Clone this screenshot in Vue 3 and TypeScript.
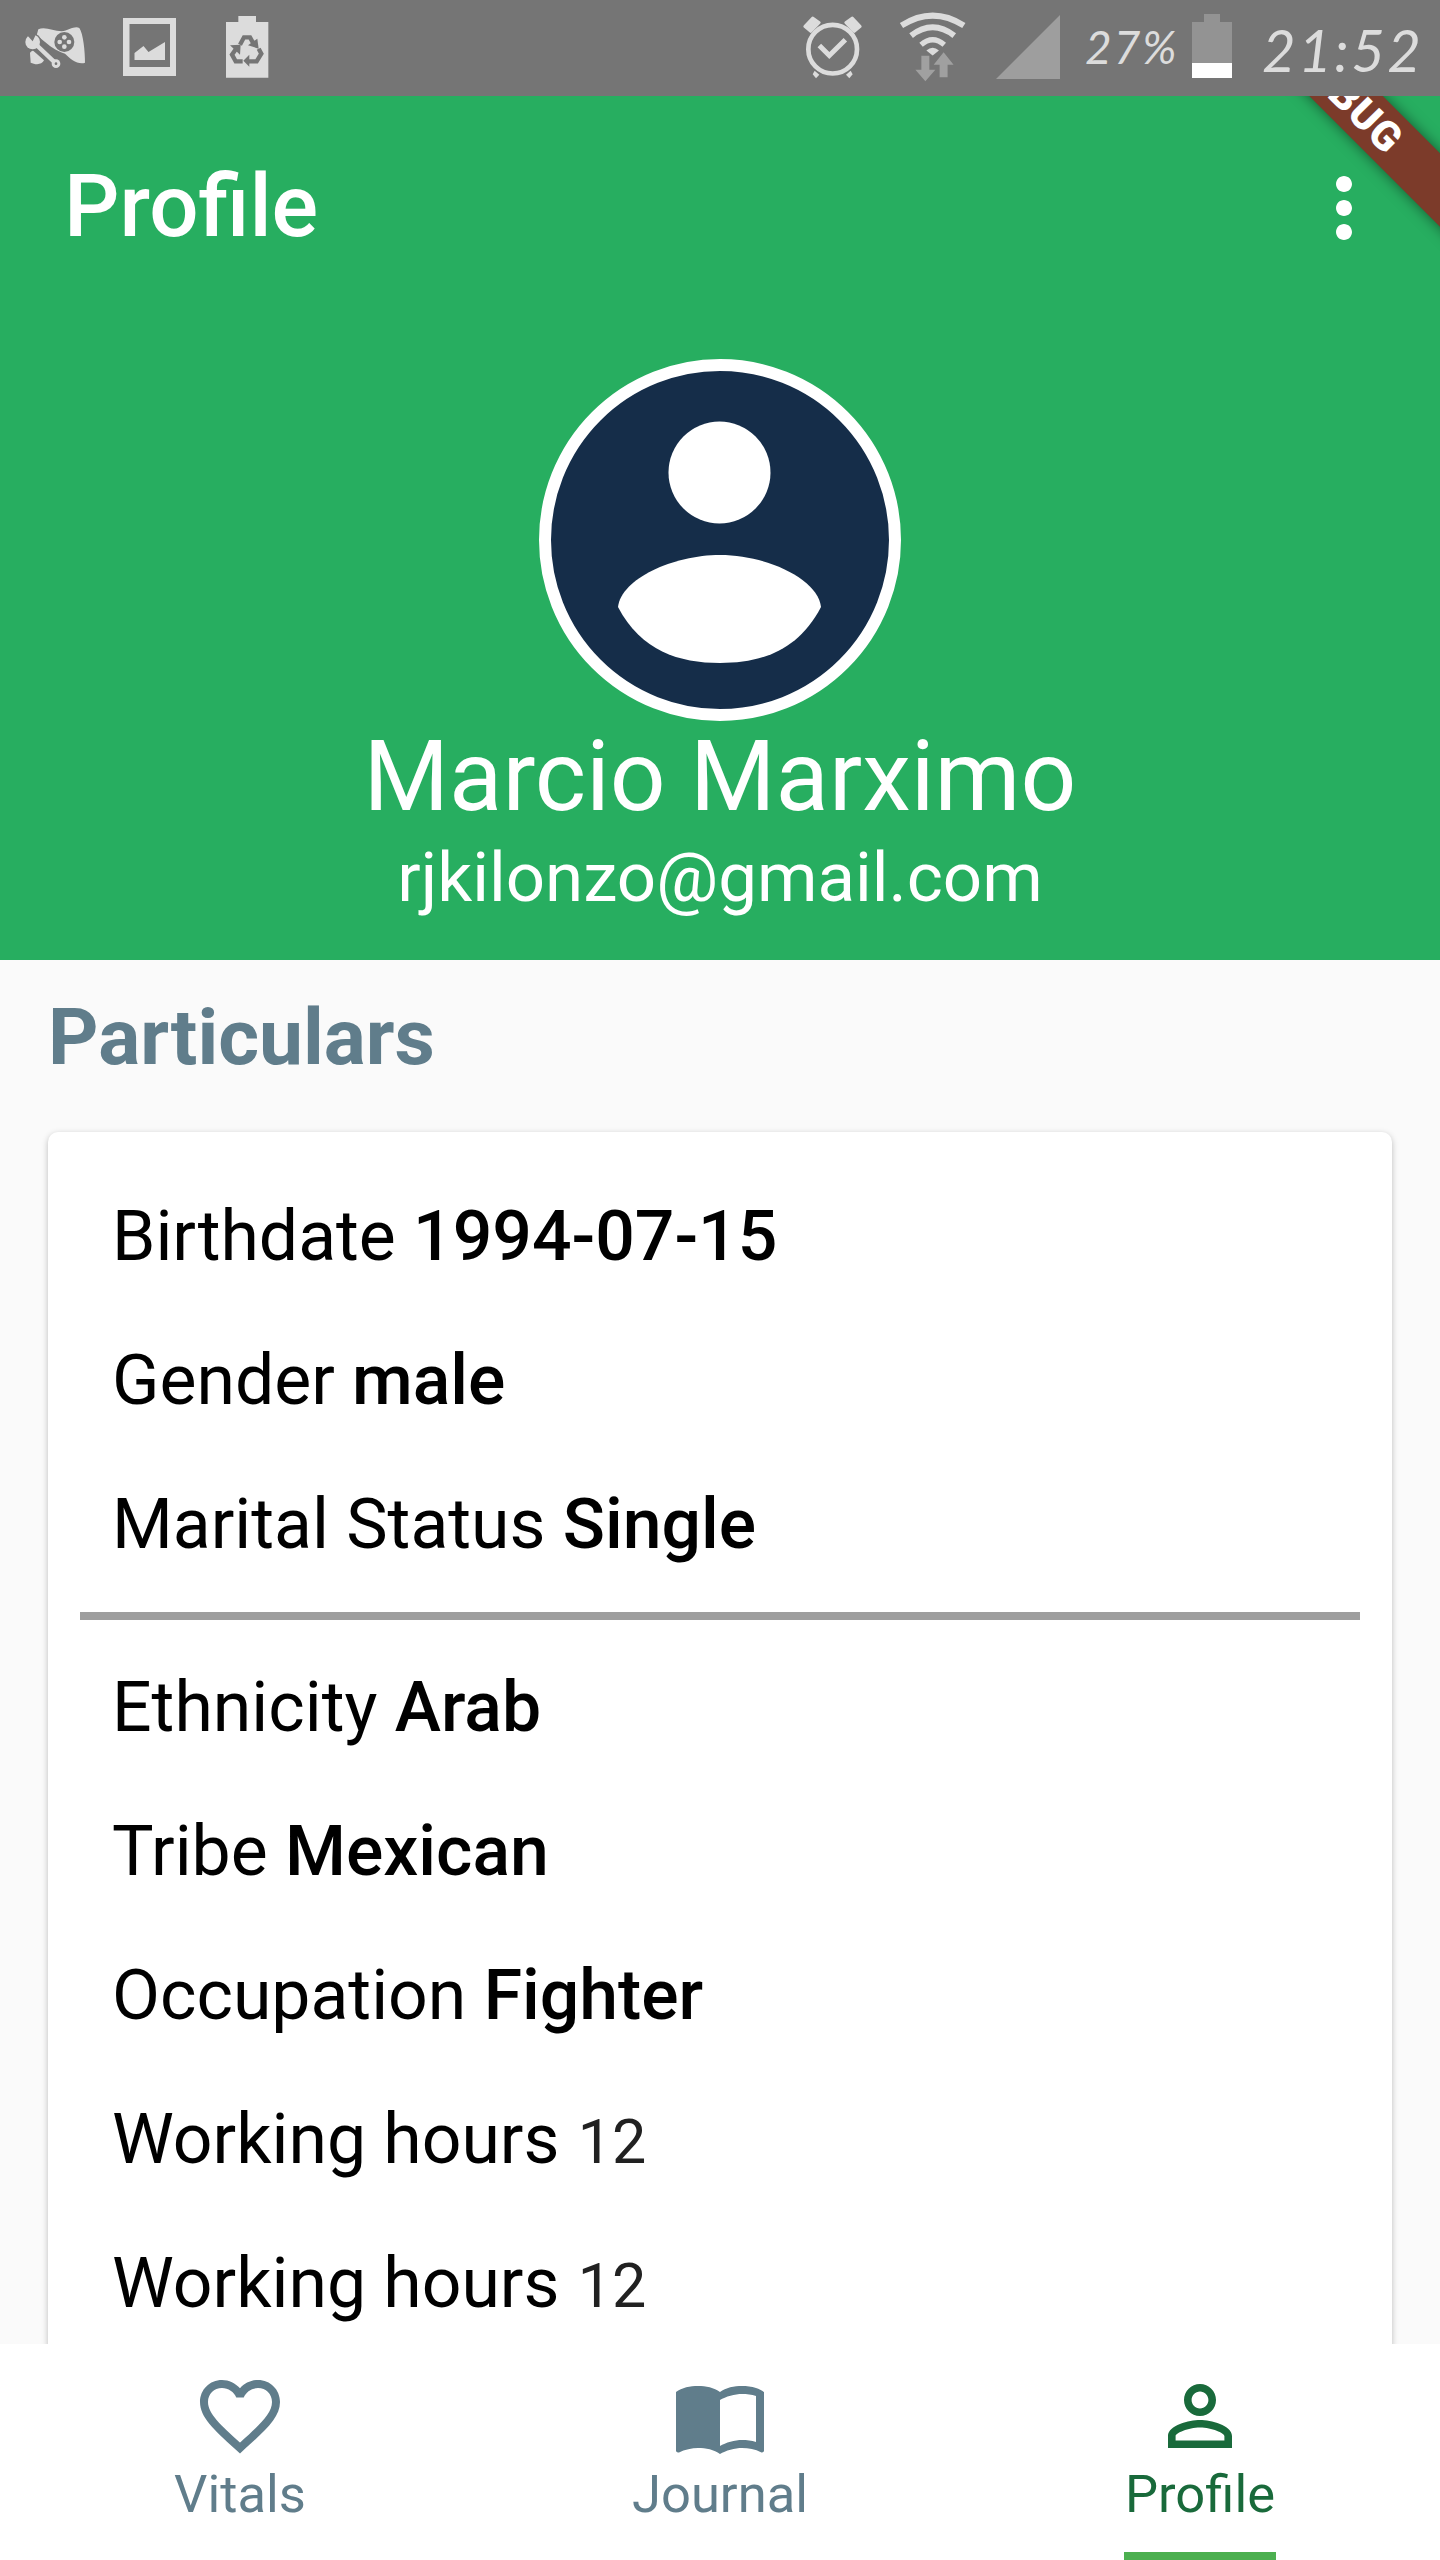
<script setup lang="ts">
interface Particular {
  label: string;
  value: string;
  plain?: boolean;
}

const personal: Particular[] = [
  { label: "Birthdate", value: "1994-07-15" },
  { label: "Gender", value: "male" },
  { label: "Marital Status", value: "Single" },
];

const other: Particular[] = [
  { label: "Ethnicity", value: "Arab" },
  { label: "Tribe", value: "Mexican" },
  { label: "Occupation", value: "Fighter" },
  { label: "Working hours", value: "12", plain: true },
  { label: "Working hours", value: "12", plain: true },
];

const tabs = [
  {
    name: "Vitals",
    active: false,
    icon: "M16.5 3c-1.74 0-3.41.81-4.5 2.09C10.91 3.81 9.24 3 7.5 3 4.42 3 2 5.42 2 8.5c0 3.78 3.4 6.86 8.55 11.54L12 21.35l1.45-1.32C18.6 15.36 22 12.28 22 8.5 22 5.42 19.58 3 16.5 3zm-4.4 15.55l-.1.1-.1-.1C7.14 14.24 4 11.39 4 8.5 4 6.5 5.5 5 7.5 5c1.54 0 3.04.99 3.57 2.36h1.87C13.46 5.99 14.96 5 16.5 5c2 0 3.5 1.5 3.5 3.5 0 2.89-3.14 5.74-7.9 10.05z",
  },
  {
    name: "Journal",
    active: false,
    icon: "M21 5c-1.11-.35-2.33-.5-3.5-.5-1.95 0-4.05.4-5.5 1.5-1.45-1.1-3.55-1.5-5.5-1.5S2.45 4.9 1 6v14.65c0 .25.25.5.5.5.1 0 .15-.05.25-.05C3.1 20.45 5.05 20 6.5 20c1.95 0 4.05.4 5.5 1.5 1.35-.85 3.8-1.5 5.5-1.5 1.65 0 3.35.3 4.75 1.05.1.05.15.05.25.05.25 0 .5-.25.5-.5V6c-.6-.45-1.25-.75-2-1zm0 13.5c-1.1-.35-2.3-.5-3.5-.5-1.7 0-4.15.65-5.5 1.5V8c1.35-.85 3.8-1.5 5.5-1.5 1.2 0 2.4.15 3.5.5v11.5z",
  },
  {
    name: "Profile",
    active: true,
    icon: "M12 5.9c1.16 0 2.1.94 2.1 2.1s-.94 2.1-2.1 2.1S9.9 9.16 9.9 8s.94-2.1 2.1-2.1m0 9c2.97 0 6.1 1.46 6.1 2.1v1.1H5.9V17c0-.64 3.13-2.1 6.1-2.1M12 4C9.79 4 8 5.79 8 8s1.79 4 4 4 4-1.79 4-4-1.79-4-4-4zm0 9c-2.67 0-8 1.34-8 4v3h16v-3c0-2.66-5.33-4-8-4z",
  },
];
</script>

<template>
  <div class="phone">
    <div class="status-bar">
      <svg class="st-game" viewBox="0 0 210 150">
        <path fill="#dcdcdc" d="M55 22C75 12 100 28 125 28C145 25 165 10 178 18C190 35 195 90 195 122C175 130 150 110 135 95C120 90 100 80 90 72L50 40Z" />
        <circle cx="133" cy="60" r="30" fill="#757575" />
        <circle cx="133" cy="46" r="7" fill="#dcdcdc" />
        <circle cx="133" cy="74" r="7" fill="#dcdcdc" />
        <circle cx="119" cy="60" r="7" fill="#dcdcdc" />
        <circle cx="147" cy="60" r="7" fill="#dcdcdc" />
        <path fill="#dcdcdc" d="M30 92L38 85L72 115C65 130 45 128 32 122Z" />
        <path fill="none" stroke="#757575" stroke-width="26" d="M40 60L110 126" />
        <circle cx="38" cy="60" r="26" fill="#757575" />
        <path fill="none" stroke="#dcdcdc" stroke-width="13" stroke-linecap="round" d="M40 60L108 125" />
        <circle cx="38" cy="60" r="22" fill="#dcdcdc" />
        <path fill="#757575" d="M18 36L38 58L50 32Z" />
        <circle cx="108" cy="125" r="13" fill="#dcdcdc" />
        <circle cx="108" cy="125" r="4" fill="#757575" />
      </svg>
      <svg class="st-photo" viewBox="0 0 53 58">
        <path fill="#dcdcdc" fill-rule="evenodd" d="M0 0H53V58H0Z M6.500 6V49H47V6Z" />
        <path fill="#dcdcdc" d="M11.500 42V35L20.500 28L25.500 34L42 24V42Z" />
      </svg>
      <svg class="st-recycle" viewBox="0 0 162 210">
        <path fill="#dcdcdc" d="M55 12H108V30H145V197H18V30H55Z" />
        <path fill="none" stroke="#757575" stroke-width="13" d="M60 98L72 76H90L100 94" />
        <path fill="#757575" d="M84 100L116 110L112 80Z" />
        <path fill="none" stroke="#757575" stroke-width="13" d="M50 108L36 128L47 148H68" />
        <path fill="#757575" d="M30 100L62 98L60 128Z" />
        <path fill="none" stroke="#757575" stroke-width="13" d="M85 148H110L124 125L116 110" />
        <path fill="#757575" d="M88 128V164L70 146Z" />
      </svg>

      <div class="spacer"></div>

      <svg class="st-alarm" viewBox="30 25 195 200">
        <path fill="#dcdcdc" stroke="#dcdcdc" stroke-width="8" stroke-linejoin="round" d="M44 65L68 39L88 53L62 80Z" />
        <path fill="#dcdcdc" stroke="#dcdcdc" stroke-width="8" stroke-linejoin="round" d="M211 65L187 39L167 53L193 80Z" />
        <circle cx="128" cy="133" r="73" fill="none" stroke="#dcdcdc" stroke-width="14" />
        <path fill="none" stroke="#dcdcdc" stroke-width="15" d="M88 122L118 152L166 105" />
        <path fill="#dcdcdc" d="M74 198L88 210L78 220L68 208Z" />
        <path fill="#dcdcdc" d="M182 198L168 210L178 220L188 208Z" />
      </svg>
      <svg class="st-wifi" viewBox="320 15 210 220">
        <g fill="none" stroke="#dcdcdc">
          <path stroke-width="18" d="M333 62Q427 2 521 62" />
          <path stroke-width="18" d="M362 92Q427 42 492 92" />
          <path stroke-width="16" d="M392 120Q427 90 462 120" />
        </g>
        <path fill="#dcdcdc" d="M408 137Q427 120 446 137L427 152Z" />
        <path fill="#a0a0a0" d="M393 153H417V195H435L405 230L375 195H393Z" />
        <path fill="#a0a0a0" d="M448 218H472V180H490L460 142L430 180H448Z" />
      </svg>
      <svg class="st-signal" viewBox="0 0 64 64">
        <path fill="#9e9e9e" d="M64 0V64H0Z" />
      </svg>
      <span class="st-percent">27%</span>
      <div class="st-battery">
        <div class="st-battery-cap"></div>
        <div class="st-battery-body">
          <div class="st-battery-level"></div>
        </div>
      </div>
      <span class="st-time">21:52</span>
    </div>

    <header class="hero">
      <div class="toolbar">
        <h1 class="title">Profile</h1>
        <svg class="more" viewBox="0 0 24 24">
          <path fill="#fff" d="M12 8c1.1 0 2-.9 2-2s-.9-2-2-2-2 .9-2 2 .9 2 2 2zm0 2c-1.1 0-2 .9-2 2s.9 2 2 2 2-.9 2-2-.9-2-2-2zm0 6c-1.1 0-2 .9-2 2s.9 2 2 2 2-.9 2-2-.9-2-2-2z" />
        </svg>
      </div>
      <div class="avatar">
        <svg viewBox="0 0 338 338">
          <circle cx="168.500" cy="101.500" r="51" fill="#fff" />
          <path fill="#fff" d="M67 236C70 208 122 184 169 184C216 184 267 208 270 236C247 280 210 292 169 292C128 292 90 280 67 236Z" />
        </svg>
      </div>
      <div class="name">Marcio Marximo</div>
      <div class="email">rjkilonzo@gmail.com</div>
      <div class="banner"><span>DEBUG</span></div>
    </header>

    <main class="content">
      <h2 class="section-title">Particulars</h2>
      <section class="card">
        <p v-for="row in personal" :key="row.label" class="row">
          {{ row.label }} <b>{{ row.value }}</b>
        </p>
        <hr class="divider" />
        <p v-for="(row, i) in other" :key="i" class="row">
          {{ row.label }} <b :class="{ plain: row.plain }">{{ row.value }}</b>
        </p>
      </section>
    </main>

    <nav class="tabs">
      <div v-for="tab in tabs" :key="tab.name" class="tab" :class="{ active: tab.active }">
        <svg class="tab-icon" viewBox="0 0 24 24">
          <path :d="tab.icon" />
        </svg>
        <span class="tab-label">{{ tab.name }}</span>
      </div>
    </nav>
  </div>
</template>

<style>
body {
  margin: 0;
}
</style>

<style scoped>
.phone {
  width: 1440px;
  height: 2560px;
  display: flex;
  flex-direction: column;
  overflow: hidden;
  background: #fafafa;
  font-family: Roboto, "Liberation Sans", sans-serif;
}

.status-bar {
  height: 96px;
  flex: none;
  display: flex;
  align-items: flex-start;
  background: #757575;
  position: relative;
  z-index: 2;
}

.spacer {
  flex: 1;
}

.st-game {
  width: 70px;
  height: 50px;
  margin: 22px 0 0 20px;
}

.st-photo {
  width: 53px;
  height: 58px;
  margin: 18px 0 0 33px;
}

.st-recycle {
  width: 54px;
  height: 70px;
  margin: 12px 0 0 44px;
}

.st-alarm {
  width: 65px;
  height: 67px;
  margin: 13px 0 0 0;
}

.st-wifi {
  width: 70px;
  height: 73px;
  margin: 10px 0 0 32px;
}

.st-signal {
  width: 64px;
  height: 64px;
  margin: 15px 0 0 29px;
}

.st-percent,
.st-time {
  font-family: Lato, sans-serif;
  font-style: italic;
  font-weight: 400;
  color: #dcdcdc;
}

.st-percent {
  font-size: 46px;
  line-height: 50px;
  margin: 22px 0 0 25px;
  width: 94px;
  letter-spacing: 2px;
}

.st-battery {
  width: 40px;
  height: 64px;
  margin: 14px 0 0 13px;
  display: flex;
  flex-direction: column;
  align-items: center;
}

.st-battery-cap {
  width: 16px;
  height: 8px;
  background: #939393;
}

.st-battery-body {
  width: 40px;
  height: 56px;
  background: #939393;
  display: flex;
  align-items: flex-end;
}

.st-battery-level {
  width: 100%;
  height: 15px;
  background: #fff;
}

.st-time {
  font-size: 58px;
  line-height: 60px;
  margin: 20px 23px 0 30px;
  width: 155px;
  letter-spacing: 2.500px;
  white-space: nowrap;
}

.hero {
  position: relative;
  height: 864px;
  flex: none;
  overflow: hidden;
  display: flex;
  flex-direction: column;
  align-items: center;
  background: #27ae60;
  color: #fff;
}

.toolbar {
  width: 100%;
  height: 224px;
  flex: none;
  box-sizing: border-box;
  display: flex;
  align-items: center;
  justify-content: space-between;
  padding: 0 48px 0 64px;
}

.title {
  margin: 0 0 4px;
  font-size: 87px;
  font-weight: 500;
}

.more {
  width: 96px;
  height: 96px;
}

.avatar {
  width: 338px;
  height: 338px;
  margin-top: 39px;
  flex: none;
  border: 12px solid #fff;
  border-radius: 50%;
  background: #152d49;
}

.avatar svg {
  display: block;
  width: 100%;
  height: 100%;
}

.name {
  font-size: 98px;
  line-height: 112px;
}

.email {
  font-size: 69px;
  line-height: 80px;
  margin-top: 5px;
}

/* debug ribbon sits across the corner */
.banner {
  position: absolute;
  left: 1071px;
  top: -51px;
  width: 500px;
  height: 52px;
  padding-left: 76px;
  box-sizing: border-box;
  transform: rotate(45deg);
  background: #7c3b2a;
  box-shadow: 0 0 14px rgba(0, 0, 0, 0.5);
  display: flex;
  align-items: center;
  justify-content: center;
  font-size: 41px;
  font-weight: 900;
  letter-spacing: 1px;
}

.content {
  flex: 1;
  min-height: 0;
  overflow: hidden;
  padding: 0 48px;
}

.section-title {
  margin: 0;
  padding-top: 32px;
  font-size: 78.500px;
  line-height: 90px;
  font-weight: 700;
  color: #607d8b;
}

.card {
  margin-top: 50px;
  padding-top: 32px;
  background: #fff;
  border-radius: 10px;
  box-shadow: 0 2px 6px rgba(0, 0, 0, 0.25);
}

.row {
  margin: 0;
  padding-left: 64px;
  height: 144px;
  line-height: 144px;
  font-size: 69.700px;
  color: #000;
}

.row b {
  font-weight: 500;
}

.row b.plain {
  font-weight: 400;
  font-size: 61px;
  margin-left: 1px;
  color: #212121;
}

.divider {
  margin: 16px 32px 15px;
  border: 0;
  height: 8px;
  background: #9e9e9e;
}

.tabs {
  height: 216px;
  flex: none;
  display: grid;
  grid-template-columns: repeat(3, 1fr);
  background: #fff;
  position: relative;
}

.tab {
  display: flex;
  flex-direction: column;
  align-items: center;
  padding-top: 24px;
  color: #607d8b;
  position: relative;
}

.tab-icon {
  width: 96px;
  height: 96px;
  fill: currentColor;
}

.tab-label {
  font-size: 52.500px;
  line-height: 60px;
}

.tab.active {
  color: #196a3b;
}

.tab.active::after {
  content: "";
  position: absolute;
  bottom: 0;
  left: 164px;
  width: 152px;
  height: 8px;
  background: #4caf50;
}
</style>
